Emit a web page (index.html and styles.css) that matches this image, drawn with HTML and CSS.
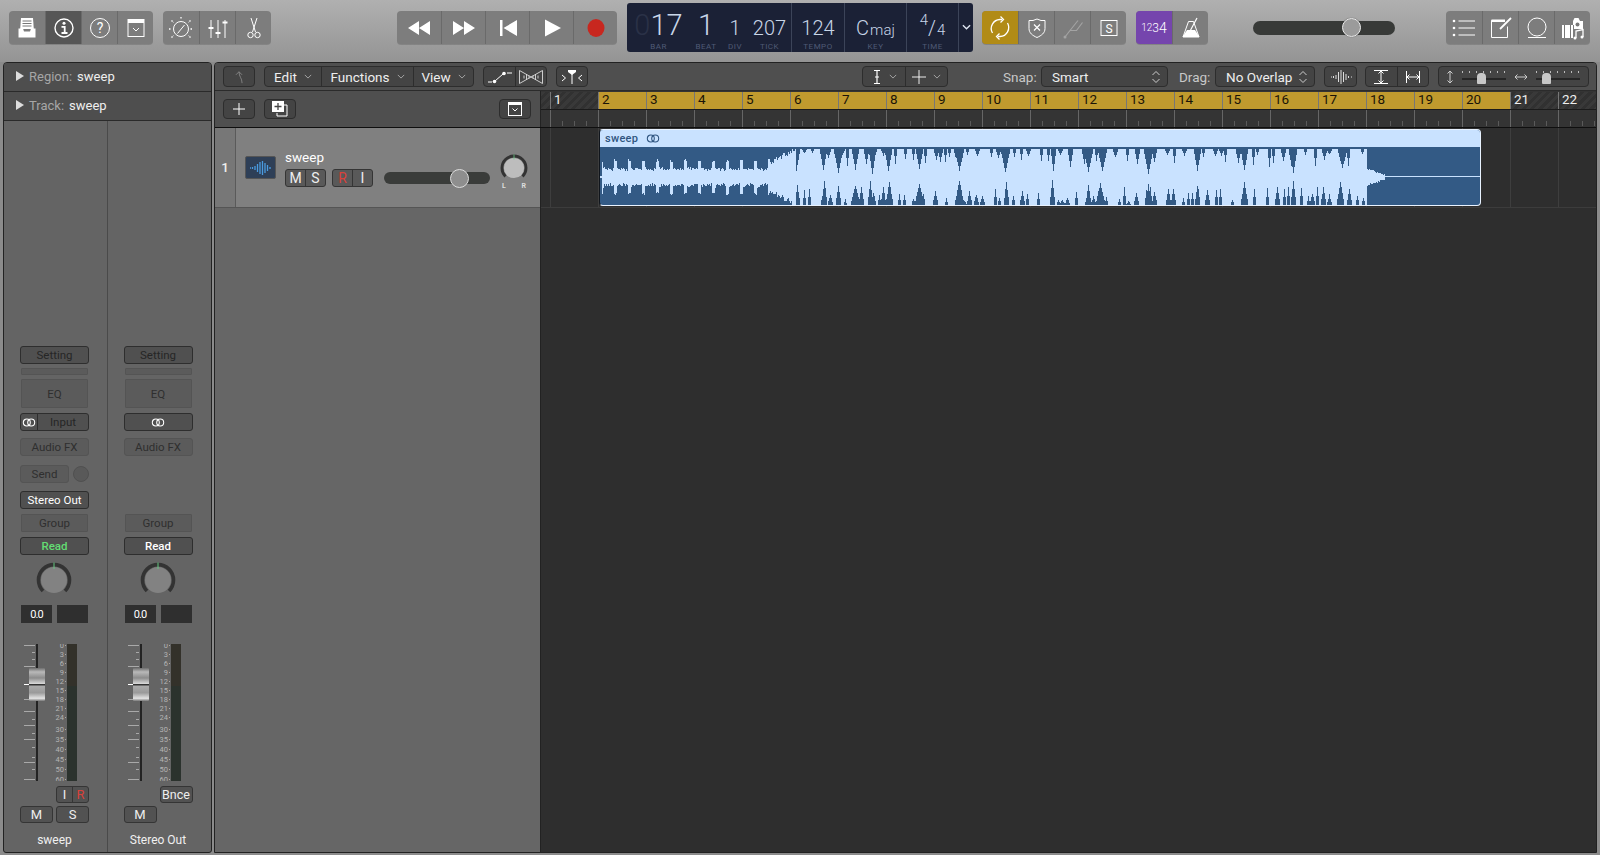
FILE: index.html
```html
<!DOCTYPE html>
<html lang="en">
<head>
    <meta charset="UTF-8">
    <title>sweep - Tracks</title>
    <link rel="stylesheet" href="styles.css">
</head>
<body>
    <!-- shared drawings -->
    <svg class="defs">
        <defs>
            <linearGradient id="capGrad" x1="0" y1="0" x2="0" y2="1">
                <stop offset="0" stop-color="#6f6f6f"/>
                <stop offset=".12" stop-color="#b9b9b9"/>
                <stop offset=".3" stop-color="#8c8c8c"/>
                <stop offset=".48" stop-color="#d9d9d9"/>
                <stop offset=".5" stop-color="#333"/>
                <stop offset=".56" stop-color="#aaa"/>
                <stop offset=".75" stop-color="#9a9a9a"/>
                <stop offset=".92" stop-color="#e2e2e2"/>
                <stop offset="1" stop-color="#777"/>
            </linearGradient>
            <symbol id="knob" viewBox="0 0 36 36">
                <circle cx="18" cy="18" r="13" class="knob-disc"/>
                <path d="M7 29A15.500 15.500 0 1 1 29 29" fill="none" stroke="#333" stroke-width="3.600"/>
                <path d="M18 .5V7" stroke="#62c77e" stroke-width="1"/>
            </symbol>
            <symbol id="link" viewBox="0 0 16 10">
                <circle cx="5.500" cy="5" r="4" fill="none" stroke="currentColor" stroke-width="1.200"/>
                <circle cx="10.500" cy="5" r="4" fill="none" stroke="currentColor" stroke-width="1.200"/>
            </symbol>
            <symbol id="chev" viewBox="0 0 10 6">
                <path d="M1 1l4 4 4-4" fill="none" stroke="currentColor" stroke-width="1"/>
            </symbol>
            <symbol id="updown" viewBox="0 0 10 14">
                <path d="M1.500 5L5 1.500 8.500 5M1.500 9L5 12.500 8.500 9" fill="none" stroke="currentColor" stroke-width="1"/>
            </symbol>
            <symbol id="fader" viewBox="0 0 69 137">
                <g stroke="#a9a9a9" stroke-width="1">
                    <path d="M4 1.500H15M12 8.500H15M12 15.500H15M4 22.500H15M12 30.500H15M12 38.500H15M4 55.500H15M12 48.500H15M4 67.500H15M12 75.500H15M4 81.500H15M12 89.500H15M4 95.500H15M12 103.500H15M4 118.500H15M12 113.500H15M12 125.500H15M4 135.500H15"/>
                    <path d="M45 1.500h1M45 10.500h1M45 19.500h1M45 28.500h1M45 37.500h1M45 46.500h1M45 55.500h1M45 64.500h1M45 73.500h1M45 85.500h1M45 95.500h1M45 105.500h1M45 115.500h1M45 125.500h1M45 135.500h1"/>
                </g>
                <rect x="16" y="0" width="2" height="137" fill="#232323"/>
                <path d="M4 40.500H10" stroke="#fff"/>
                <rect x="9" y="24" width="16" height="33" rx="1" fill="url(#capGrad)"/>
                <rect x="47" y="0" width="10" height="137" fill="#2b322d"/>
                <rect x="47" y="0" width="10" height="42" fill="#383029" opacity=".7"/>
                <g class="scale-text" text-anchor="end">
                    <text x="44" y="4">0</text><text x="44" y="13">3</text><text x="44" y="22">6</text>
                    <text x="44" y="31">9</text><text x="44" y="40">12</text><text x="44" y="49">15</text>
                    <text x="44" y="58">18</text><text x="44" y="67">21</text><text x="44" y="76">24</text>
                    <text x="44" y="88">30</text><text x="44" y="98">35</text><text x="44" y="108">40</text>
                    <text x="44" y="118">45</text><text x="44" y="128">50</text><text x="44" y="138">60</text>
                </g>
            </symbol>
        </defs>
    </svg>

    <header class="toolbar">
        <div class="tb-group first">
            <div class="tb-btn">
                <svg viewBox="0 0 24 24"><path d="M6 2h12l.8 11H5.200z" fill="#fff"/><path d="M7.500 5h9M7.500 7.500h9M7.500 10h9" stroke="#777" stroke-width="1"/><path d="M3.500 12.500h4.500l1 3h6l1-3h4.500v9H3.500z" fill="#fff"/></svg>
            </div>
            <div class="tb-btn active">
                <svg viewBox="0 0 24 24"><circle cx="12" cy="12" r="9" class="line" stroke-width="1.400"/><circle cx="12" cy="7.300" r="1.500" fill="#fff"/><path d="M9.500 10.800h3.200v6M9.500 17h6" class="line" stroke-width="1.800"/></svg>
            </div>
            <div class="tb-btn">
                <svg viewBox="0 0 24 24"><circle cx="12" cy="12" r="9.500" class="line" stroke-width="1"/><text x="12" y="17" class="glyph" font-size="14">?</text></svg>
            </div>
            <div class="tb-btn">
                <svg viewBox="0 0 24 24"><rect x="4" y="3.500" width="16" height="17" class="line" stroke-width="1"/><rect x="4" y="3.500" width="16" height="3.500" fill="#fff"/><path d="M9 12l3 3 3-3" class="line" stroke-width="1"/></svg>
            </div>
        </div>
        <div class="tb-group second">
            <div class="tb-btn">
                <svg viewBox="0 0 24 24"><circle cx="12" cy="13" r="7.500" class="line" stroke-width="1"/><path d="M8.500 17.500L15.500 9" class="line" stroke-width="1"/><path d="M12 1v2.500M2.500 4.500l2 2M21.500 4.500l-2 2M0 13h2.500M21.500 13H24M2.500 21.500l2-2M21.500 21.500l-2-2" class="line" stroke-dasharray="1.500 1" stroke-width="1.300"/></svg>
            </div>
            <div class="tb-btn">
                <svg viewBox="0 0 24 24"><path d="M5 4v18M12 4v18M19 4v18" class="line" stroke-width="1"/><path d="M2.500 12h5M9.500 17h5M16.500 6.500h5" stroke="#fff" stroke-width="1.800"/></svg>
            </div>
            <div class="tb-btn">
                <svg viewBox="0 0 24 24"><path d="M9 2l4.500 14M15 2l-4.500 14" class="line" stroke-width="1"/><circle cx="8.500" cy="19" r="2.700" class="line" stroke-width="1"/><circle cx="15.500" cy="19" r="2.700" class="line" stroke-width="1"/></svg>
            </div>
        </div>
        <div class="tb-group transport">
            <div class="tb-btn wide">
                <svg viewBox="0 0 24 24"><path d="M12 5v14L1 12zM23 5v14L12 12z" fill="#fff"/></svg>
            </div>
            <div class="tb-btn wide">
                <svg viewBox="0 0 24 24"><path d="M1 5v14l11-7zM12 5v14l11-7z" fill="#fff"/></svg>
            </div>
            <div class="tb-btn wide">
                <svg viewBox="0 0 24 24"><path d="M4 4h2.500v16H4zM21 4v16L7.500 12z" fill="#fff"/></svg>
            </div>
            <div class="tb-btn wide">
                <svg viewBox="0 0 24 24"><path d="M5 3.500v17L21 12z" fill="#fff"/></svg>
            </div>
            <div class="tb-btn wide">
                <svg viewBox="0 0 24 24"><ellipse cx="12" cy="12" rx="8.500" ry="9" fill="#c8271f"/></svg>
            </div>
        </div>

        <div class="lcd">
            <div class="lcd-cell bar"><div class="lcd-val big"><span class="ghost">0</span>17</div><div class="lcd-label">BAR</div></div>
            <div class="lcd-cell beat"><div class="lcd-val big">1</div><div class="lcd-label">BEAT</div></div>
            <div class="lcd-cell div"><div class="lcd-val">1</div><div class="lcd-label">DIV</div></div>
            <div class="lcd-cell tick sep"><div class="lcd-val">207</div><div class="lcd-label">TICK</div></div>
            <div class="lcd-cell tempo sep"><div class="lcd-val">124</div><div class="lcd-label">TEMPO</div></div>
            <div class="lcd-cell key sep"><div class="lcd-val">C<small>maj</small></div><div class="lcd-label">KEY</div></div>
            <div class="lcd-cell time sep"><div class="lcd-val"><sup>4</sup>/<small>4</small></div><div class="lcd-label">TIME</div></div>
            <div class="lcd-more"><svg viewBox="0 0 10 6"><path d="M1 1l4 4 4-4" fill="none" stroke="#dfe6f2" stroke-width="1.500"/></svg></div>
        </div>

        <div class="tb-group cycle">
            <div class="tb-btn gold">
                <svg viewBox="0 0 24 24"><path d="M4.500 17A9 9 0 0 1 12 3.500h2M19.500 7A9 9 0 0 1 12 20.500h-2" class="line" stroke-width="1.300"/><path d="M12.500 .5l3 3-3 3M11.500 17.500l-3 3 3 3" class="line" stroke-width="1.300"/></svg>
            </div>
            <div class="tb-btn">
                <svg viewBox="0 0 24 24"><path d="M4 4.500h4l4-1.500 4 1.500h4v8c0 4.500-3.500 7-8 9-4.500-2-8-4.500-8-9z" class="line" stroke-width="1"/><path d="M9 8.500l6 6M15 8.500l-6 6" class="line" stroke-width="1.200"/></svg>
            </div>
            <div class="tb-btn">
                <svg viewBox="0 0 24 24"><path d="M4 21l5-6.500M9 14.500l8-10M9 14.500l6.500 0 6-8" fill="none" stroke="#a3a3a3" stroke-width="1.200"/><circle cx="4" cy="21" r="1.500" fill="#a3a3a3"/></svg>
            </div>
            <div class="tb-btn">
                <svg viewBox="0 0 24 24"><rect x="4" y="4.500" width="16" height="15" class="line" stroke-width="1"/><text x="12" y="16.500" class="glyph" font-size="12">S</text></svg>
            </div>
        </div>
        <div class="tb-group count">
            <div class="tb-btn purple"><span class="count-in"><i>1</i><i>2</i><b>3</b><em>4</em></span></div>
            <div class="tb-btn">
                <svg viewBox="0 0 24 24"><path d="M4 21L9.500 5.500h5L20 21z" class="line" stroke-width="1"/><path d="M3.500 21L8 14h8l4.500 7z" fill="#fff"/><path d="M10 17L18 2" class="line" stroke-width="1.200"/></svg>
            </div>
        </div>
        <div class="master">
            <div class="master-knob"></div>
        </div>
        <div class="tb-group views">
            <div class="tb-btn">
                <svg viewBox="0 0 24 24"><path d="M6.500 5H23M6.500 12H23M6.500 19H23" class="line" stroke-width="1"/><circle cx="2" cy="5" r="1.300" fill="#fff"/><circle cx="2" cy="12" r="1.300" fill="#fff"/><circle cx="2" cy="19" r="1.300" fill="#fff"/></svg>
            </div>
            <div class="tb-btn">
                <svg viewBox="0 0 24 24"><path d="M18.500 10.500V21.500H2.500V4.500H15" class="line" stroke-width="1"/><path d="M2.500 3.500H16V6H2.500z" fill="#fff"/><path d="M11 13L22 2" stroke="#fff" stroke-width="1.800"/></svg>
            </div>
            <div class="tb-btn">
                <svg viewBox="0 0 24 24"><circle cx="12" cy="11" r="9" class="line" stroke-width="1"/><path d="M3 21.500h18" class="line" stroke-width="1"/></svg>
            </div>
            <div class="tb-btn">
                <svg viewBox="0 0 24 24"><path d="M12 5l1.500-3h4L19 5h3v8h-9V9H12z" fill="#fff"/><circle cx="16.500" cy="8.500" r="2" fill="#777"/><path d="M1 9h11v13H1z" fill="#fff"/><path d="M3.500 9v13M9.500 9v13" stroke="#777"/><path d="M15 22v-7l7-1.500V21" class="line" stroke-width="1.300"/><circle cx="14" cy="22" r="1.500" fill="#fff"/><circle cx="21" cy="21" r="1.500" fill="#fff"/></svg>
            </div>
        </div>
    </header>

    <div class="workspace">
        <aside class="inspector">
            <div class="insp-row"><span class="tri"></span><span class="insp-key">Region:</span> sweep</div>
            <div class="insp-row"><span class="tri"></span><span class="insp-key">Track:</span> sweep</div>
            <div class="strips">
                <div class="strip">
                    <div class="s-btn dim">Setting</div>
                    <div class="s-slot thin"></div>
                    <div class="s-slot eq">EQ</div>
                    <div class="s-btn input"><span class="input-link"><svg class="link-ic"><use href="#link"/></svg></span><span class="input-name">Input</span></div>
                    <div class="s-slot fx">Audio FX</div>
                    <div class="send-row"><div class="s-slot send">Send</div><div class="send-dot"></div></div>
                    <div class="s-btn out">Stereo Out</div>
                    <div class="s-slot group">Group</div>
                    <div class="s-btn read green">Read</div>
                    <svg class="s-knob"><use href="#knob"/></svg>
                    <div class="vals"><div class="val">0.0</div><div class="val"></div></div>
                    <svg class="s-fader"><use href="#fader"/></svg>
                    <div class="s-row-a"><div class="pair"><span>I</span><span class="red">R</span></div></div>
                    <div class="s-row-b"><div class="mini">M</div><div class="mini">S</div></div>
                    <div class="s-name">sweep</div>
                </div>
                <div class="strip">
                    <div class="s-btn dim">Setting</div>
                    <div class="s-slot thin"></div>
                    <div class="s-slot eq">EQ</div>
                    <div class="s-btn input"><svg class="link-ic"><use href="#link"/></svg></div>
                    <div class="s-slot fx">Audio FX</div>
                    <div class="send-row"></div>
                    <div class="out-gap"></div>
                    <div class="s-slot group">Group</div>
                    <div class="s-btn read">Read</div>
                    <svg class="s-knob"><use href="#knob"/></svg>
                    <div class="vals"><div class="val">0.0</div><div class="val"></div></div>
                    <svg class="s-fader"><use href="#fader"/></svg>
                    <div class="s-row-a"><div class="mini bnce">Bnce</div></div>
                    <div class="s-row-b"><div class="mini">M</div></div>
                    <div class="s-name">Stereo Out</div>
                </div>
            </div>
        </aside>

        <main class="tracks">
            <div class="local-bar">
                <div class="lb-group back"><span class="lb-item w30"><svg viewBox="0 0 14 16" class="ic-14"><path d="M10.500 15C10.500 9 7 8 7 2M3.500 5.500L7 2l3.500 3.500" fill="none" stroke="#888"/></svg></span></div>
                <div class="lb-group menus">
                    <span class="lb-item edit">Edit<svg class="chev"><use href="#chev"/></svg></span>
                    <span class="lb-item funcs">Functions<svg class="chev"><use href="#chev"/></svg></span>
                    <span class="lb-item view">View<svg class="chev"><use href="#chev"/></svg></span>
                </div>
                <div class="lb-group auto">
                    <span class="lb-item w31"><svg viewBox="0 0 26 14" class="ic-26"><path d="M1 12h4M8 11l8-7M20 3h5" stroke="#fff"/><circle cx="7.500" cy="11.500" r="1.800" fill="#fff"/><circle cx="17" cy="3.500" r="1.800" fill="#fff"/></svg></span>
                    <span class="lb-item w31"><svg viewBox="0 0 26 16" class="ic-26"><path d="M1.500 1.500L24.500 14.500M1.500 14.500L24.500 1.500M1.500 1.500V14.500M24.500 1.500V14.500" fill="none" stroke="#ddd" stroke-width=".9"/><path d="M6 6.500v3M8.500 5v6M11 6.500v3M15 6.500v3M17.500 5v6M20 6.500v3" stroke="#ddd" stroke-width=".9"/></svg></span>
                </div>
                <div class="lb-group catch"><span class="lb-item w30"><svg viewBox="0 0 26 16" class="ic-26"><path d="M3 6l3.500 3L3 12M23 6l-3.500 3 3.500 3M13 5v10" fill="none" stroke="#fff"/><path d="M9 1h8v2l-4 3-4-3z" fill="#fff"/></svg></span></div>
                <div class="lb-group tools">
                    <span class="lb-item tool"><svg viewBox="0 0 10 16" class="ic-10"><path d="M2 1.500h6M2 14.500h6M5 1.500v13M3 8h4" stroke="#fff" stroke-width="1.200"/></svg><svg class="chev"><use href="#chev"/></svg></span>
                    <span class="lb-item tool"><svg viewBox="0 0 14 14" class="ic-14"><path d="M7 0v14M0 7h14" stroke="#fff" stroke-width=".9"/></svg><svg class="chev"><use href="#chev"/></svg></span>
                </div>
                <span class="lb-label snap">Snap:</span>
                <div class="lb-group select smart"><span>Smart</span><svg class="updown"><use href="#updown"/></svg></div>
                <span class="lb-label drag">Drag:</span>
                <div class="lb-group select overlap"><span>No Overlap</span><svg class="updown"><use href="#updown"/></svg></div>
                <div class="lb-group wavebtn"><span class="lb-item fill"><svg viewBox="0 0 22 14" class="ic-22"><path d="M1 7h1M3.500 6v2M6 5v4M8.500 2v10M11 0v14M13.500 2v10M16 4v6M18.500 6v2M21 7h1" stroke="#ddd"/></svg></span></div>
                <div class="lb-group fitgrp">
                    <span class="lb-item fill"><svg viewBox="0 0 16 14" class="ic-16"><path d="M1 .5h14M1 13.500h14" stroke="#fff"/><path d="M8 1v12M5.500 3.500L8 1l2.500 2.500M5.500 10.500L8 13l2.500-2.500" fill="none" stroke="#fff"/></svg></span>
                    <span class="lb-item fill"><svg viewBox="0 0 14 14" class="ic-14"><path d="M.5 1v12M13.500 1v12" stroke="#fff"/><path d="M1 7h12M3.500 4.500L1 7l2.500 2.500M10.500 4.500L13 7l-2.500 2.500" fill="none" stroke="#fff"/></svg></span>
                </div>
                <div class="lb-group zooms">
                    <svg viewBox="0 0 8 14" class="ic-8"><path d="M4 1v12M1.500 3.500L4 1l2.500 2.500M1.500 10.500L4 13l2.500-2.500" fill="none" stroke="#ccc"/></svg>
                    <div class="zoom-slider first"><i class="dots"></i><b></b></div>
                    <svg viewBox="0 0 14 8" class="ic-14 gap"><path d="M1 4h12M3.500 1.500L1 4l2.500 2.500M10.500 1.500L13 4l-2.500 2.500" fill="none" stroke="#ccc"/></svg>
                    <div class="zoom-slider second"><i class="dots"></i><b></b></div>
                </div>
            </div>

            <div class="ruler-row">
                <div class="head-tools">
                    <div class="lb-group w32 add"><svg viewBox="0 0 12 12" class="ic-12"><path d="M6 0v12M0 6h12" stroke="#fff"/></svg></div>
                    <div class="lb-group w32 dup"><svg viewBox="0 0 18 18" class="ic-18"><path d="M12 5h4v11H6v-3" fill="none" stroke="#fff"/><path d="M1 1h12v11H1z" fill="#fff"/><path d="M7 3v7M3.500 6.500h7" stroke="#444" stroke-width="1.300"/></svg></div>
                    <div class="lb-group w32 collapse"><svg viewBox="0 0 14 14" class="ic-14"><rect x=".5" y=".5" width="13" height="13" fill="none" stroke="#fff"/><path d="M.5 .5h13v2.500H.5z" fill="#fff"/><path d="M4.500 6.500L7 9l2.500-2.500" fill="none" stroke="#fff"/></svg></div>
                </div>
                <div class="ruler">
                    <div class="ruler-bars">
                        <span class="mark"></span>
                        <span>1</span><span class="on">2</span><span class="on">3</span><span class="on">4</span><span class="on">5</span><span class="on">6</span><span class="on">7</span><span class="on">8</span><span class="on">9</span><span class="on">10</span><span class="on">11</span><span class="on">12</span><span class="on">13</span><span class="on">14</span><span class="on">15</span><span class="on">16</span><span class="on">17</span><span class="on">18</span><span class="on">19</span><span class="on">20</span><span>21</span><span>22</span>
                    </div>
                    <div class="ruler-ticks"></div>
                </div>
            </div>

            <div class="body">
                <div class="track-list">
                    <div class="track">
                        <div class="track-num">1</div>
                        <div class="track-icon"><svg viewBox="0 0 24 16"><path d="M1 8h1M3.500 7v2M6 6v4M8.500 4v8M11 2v12M13.500 1v14M16 3v10M18.500 5v6M21 7v2" stroke="#4a9be0" stroke-width="1.300"/></svg></div>
                        <div class="track-main">
                            <div class="track-name">sweep</div>
                            <div class="track-btns">
                                <div class="pair ms"><span>M</span><span>S</span></div>
                                <div class="pair ri"><span class="red">R</span><span>I</span></div>
                            </div>
                        </div>
                        <div class="track-vol"><div class="track-vol-knob"></div></div>
                        <div class="track-pan">
                            <svg class="pan-knob"><use href="#knob"/></svg>
                            <div class="pan-lr"><span>L</span><span>R</span></div>
                        </div>
                    </div>
                </div>
                <div class="arrange">
                    <div class="lane">
                        <div class="region">
                            <div class="region-head">sweep<svg class="link-ic dark"><use href="#link"/></svg></div>
                            <svg id="wave" class="region-wave" width="880" height="58" viewBox="0 0 880 58"></svg>
                        </div>
                    </div>
                </div>
            </div>
        </main>
    </div>
    <script src="wave.js"></script>
</body>
</html>
```

FILE: styles.css
```css
* {
    box-sizing: border-box;
}
html, body {
    margin: 0;
    height: 855px;
    overflow: hidden;
}
body {
    font-family: Roboto, "Liberation Sans", sans-serif;
    background-color: #8b8b8b;
    color: #eee;
}
.defs {
    position: absolute;
    width: 0;
    height: 0;
}
.line {
    fill: none;
    stroke: #fff;
}
.glyph {
    fill: #fff;
    text-anchor: middle;
    font-family: Roboto, sans-serif;
}

/* top toolbar */
.toolbar {
    display: flex;
    align-items: flex-start;
    height: 62px;
    padding-top: 11px;
    background: linear-gradient(#b0b0b0, #949494);
}
.tb-group {
    display: flex;
    height: 33px;
    background-color: #7d7d7d;
    border-radius: 4px;
    overflow: hidden;
    box-shadow: 0 1px 0 rgba(0,0,0,0.15);
}
.tb-group.first { margin-left: 9px; }
.tb-group.second { margin-left: 10px; }
.tb-group.transport { margin-left: 126px; }
.tb-group.cycle { margin-left: 9px; }
.tb-group.count { margin-left: 10px; }
.tb-group.views { margin-left: 51px; }
.tb-btn {
    display: flex;
    align-items: center;
    justify-content: center;
    width: 36px;
    border-left: 1px solid #6a6a6a;
}
.tb-btn:first-child {
    border-left: none;
}
.tb-btn svg {
    width: 24px;
    height: 24px;
}
.tb-btn.wide {
    width: 44px;
}
.tb-btn.active {
    background-color: #565656;
}
.tb-btn.gold {
    background-color: #b18b16;
}
.tb-btn.purple {
    background-color: #7545ad;
}
.count-in {
    display: flex;
    align-items: center;
    color: #fff;
    font-weight: 300;
}
.count-in i {
    font-style: normal;
    font-size: 10px;
}
.count-in b {
    font-weight: 300;
    font-size: 12px;
}
.count-in em {
    font-style: normal;
    font-size: 14px;
}

/* LCD */
.lcd {
    display: flex;
    width: 346px;
    height: 49px;
    margin-left: 10px;
    margin-top: -8px;
    background-color: #1b2136;
    border-radius: 3px;
    color: #c9d6e8;
}
.lcd-cell {
    display: flex;
    flex-direction: column;
    align-items: center;
    height: 100%;
    font-weight: 300;
}
.lcd-cell.sep {
    border-right: 1px solid #3c4459;
}
.lcd-val {
    display: flex;
    align-items: baseline;
    justify-content: center;
    height: 38px;
    padding-top: 11px;
    font-size: 20px;
    line-height: 28px;
    white-space: nowrap;
}
.lcd-val.big {
    padding-top: 6px;
    font-size: 29px;
    line-height: 32px;
}
.lcd-val small {
    font-size: 15px;
    margin-left: 1px;
}
.lcd-val sup {
    font-size: 15px;
    line-height: 10px;
    align-self: flex-start;
    margin-top: 1px;
}
.ghost {
    color: #2a3147;
}
.lcd-label {
    font-size: 8px;
    letter-spacing: .5px;
    color: #4f5a75;
    line-height: 12px;
    font-weight: 400;
}
.bar { width: 63px; }
.beat { width: 32px; }
.div { width: 26px; }
.tick { width: 44px; }
.tempo { width: 53px; }
.key { width: 62px; }
.time { width: 52px; }
.lcd-more {
    display: flex;
    align-items: center;
    justify-content: center;
    flex: 1;
    padding-bottom: 2px;
}
.lcd-more svg {
    width: 9px;
    height: 6px;
}

/* master volume */
.master {
    position: relative;
    width: 142px;
    height: 14px;
    margin-left: 45px;
    margin-top: 10px;
    border-radius: 7px;
    background-color: #383a38;
}
.master-knob {
    position: absolute;
    left: 89px;
    top: -3px;
    width: 19px;
    height: 19px;
    border-radius: 50%;
    border: 1px solid #eee;
    background-color: #9b9b9b;
    box-shadow: 0 0 1px #333;
}

/* main area */
.workspace {
    display: flex;
    gap: 2px;
    height: 791px;
    padding: 0 3px;
}

/* inspector */
.inspector {
    display: flex;
    flex-direction: column;
    width: 209px;
    border: 1px solid #222;
    border-radius: 4px 4px 3px 3px;
    overflow: hidden;
    background-color: #646464;
}
.insp-row {
    display: flex;
    align-items: center;
    flex: 0 0 29px;
    padding: 0 0 2px 12px;
    gap: 5px;
    font-size: 13px;
    background-color: #4e4e4e;
    border-bottom: 1px solid #2a2a2a;
}
.tri {
    width: 0;
    height: 0;
    border-left: 8px solid #ddd;
    border-top: 5.500px solid transparent;
    border-bottom: 5.500px solid transparent;
}
.insp-key {
    color: #a6a6a6;
}
.strips {
    display: flex;
    flex: 1;
}
.strip {
    display: flex;
    flex-direction: column;
    align-items: flex-start;
    width: 104px;
    padding: 225px 0 0 16px;
    border-right: 1px solid #4a4a4a;
    font-size: 11.500px;
}
.strip:last-child {
    border-right: none;
}
.s-btn, .s-slot {
    display: flex;
    align-items: center;
    justify-content: center;
    width: 69px;
    height: 18px;
    border-radius: 3px;
}
.s-btn {
    background-color: #505050;
    border: 1px solid #2e2e2e;
    color: #fff;
}
.s-btn.dim {
    color: #262626;
}
.s-slot {
    margin-left: 1px;
    width: 67px;
    background-color: #5b5b5b;
    border: 1px solid #545454;
    border-radius: 1px;
    color: #2f2f2f;
}
.s-slot.thin {
    height: 7px;
    margin-top: 4px;
}
.s-slot.eq {
    height: 29px;
    margin-top: 4px;
}
.s-btn.input {
    margin-top: 5px;
    overflow: hidden;
}
.input-link {
    display: flex;
    align-items: center;
    justify-content: center;
    width: 17px;
    height: 100%;
    border-right: 1px solid #2e2e2e;
}
.input-name {
    flex: 1;
    text-align: center;
    color: #262626;
}
.link-ic {
    width: 14px;
    height: 9px;
    color: #fff;
}
.link-ic.dark {
    margin-left: 8px;
    color: #2f5580;
}
.s-slot.fx {
    margin: 7px 0 0;
    width: 69px;
    border-radius: 3px;
}
.send-row {
    display: flex;
    align-items: center;
    gap: 4px;
    height: 18px;
    margin-top: 9px;
}
.s-slot.send {
    width: 49px;
    margin: 0;
    border-radius: 3px;
}
.send-dot {
    width: 16px;
    height: 16px;
    border-radius: 50%;
    background-color: #595959;
    border: 1px solid #505050;
}
.s-btn.out {
    margin-top: 8px;
}
.out-gap {
    height: 18px;
    margin-top: 8px;
}
.s-slot.group {
    margin-top: 5px;
}
.s-btn.read {
    margin-top: 5px;
    font-weight: 500;
}
.s-btn.green {
    color: #63dd73;
}
.s-knob {
    width: 36px;
    height: 36px;
    margin: 7px 0 0 16px;
    --disc: #828282;
}
.knob-disc {
    fill: var(--disc);
}
.vals {
    display: flex;
    gap: 5px;
    margin: 7px 0 0 1px;
}
.val {
    display: flex;
    align-items: center;
    justify-content: center;
    width: 31px;
    height: 18px;
    background-color: #2f2f2f;
    color: #fff;
    font-size: 11px;
    letter-spacing: -1px;
}
.s-fader {
    width: 69px;
    height: 137px;
    margin-top: 21px;
}
.scale-text {
    fill: #b4b4b4;
    font-size: 7.500px;
    font-family: Roboto, sans-serif;
}
.s-row-a {
    display: flex;
    justify-content: flex-end;
    width: 69px;
    height: 17px;
    margin-top: 5px;
}
.s-row-b {
    display: flex;
    gap: 3px;
    margin-top: 3px;
}
.mini {
    display: flex;
    align-items: center;
    justify-content: center;
    width: 33px;
    height: 17px;
    background-color: #525252;
    border: 1px solid #353535;
    border-radius: 3px;
    font-size: 13px;
}
.mini.bnce {
    font-size: 12.500px;
}
.pair {
    display: flex;
    width: 33px;
    height: 17px;
    background-color: #525252;
    border: 1px solid #353535;
    border-radius: 3px;
    font-size: 13px;
}
.pair span {
    flex: 1;
    text-align: center;
    line-height: 15px;
    border-left: 1px solid #353535;
}
.pair span:first-child {
    border-left: none;
}
.red {
    color: #d9413a;
}
.s-name {
    width: 69px;
    margin-top: 10px;
    text-align: center;
    font-size: 12px;
    color: #f0f0f0;
    white-space: nowrap;
}

/* tracks area */
.tracks {
    display: flex;
    flex-direction: column;
    flex: 1;
    min-width: 0;
    border: 1px solid #222;
    border-radius: 4px 4px 0 0;
    overflow: hidden;
    background-color: #666;
}
.local-bar {
    display: flex;
    align-items: center;
    flex: 0 0 28px;
    padding: 0 0 0 8px;
    background-color: #4f4f4f;
    border-bottom: 1px solid #2b2b2b;
    font-size: 13.500px;
}
.lb-group {
    display: flex;
    flex: none;
    align-items: center;
    height: 21px;
    background-color: #444;
    border: 1px solid #2d2d2d;
    border-radius: 4px;
}
.lb-item {
    display: flex;
    align-items: center;
    justify-content: center;
    gap: 7px;
    height: 100%;
    border-left: 1px solid #2d2d2d;
}
.lb-item:first-child {
    border-left: none;
}
.lb-item.w30 { width: 30px; }
.lb-item.w31 { width: 31px; }
.lb-group.w32 {
    justify-content: center;
    width: 32px;
}
.lb-item.edit { width: 56px; }
.lb-item.funcs { width: 92px; }
.lb-item.view { width: 60px; }
.lb-item.tool { width: 42px; }
.lb-item.fill { flex: 1; }
.chev {
    width: 8px;
    height: 5px;
    color: #bbb;
}
.updown {
    width: 10px;
    height: 14px;
    color: #ccc;
}
.ic-8 { width: 8px; height: 14px; }
.ic-10 { width: 10px; height: 16px; }
.ic-12 { width: 12px; height: 12px; }
.ic-14 { width: 14px; height: 14px; }
.ic-16 { width: 16px; height: 14px; }
.ic-18 { width: 18px; height: 18px; }
.ic-22 { width: 22px; height: 14px; }
.ic-26 { width: 26px; height: 16px; }
.lb-group.menus { margin-left: 9px; }
.lb-group.auto { margin-left: 9px; }
.lb-group.catch { margin-left: 9px; }
.lb-group.tools { margin-left: 274px; }
.lb-label {
    flex: 0 0 34px;
    color: #c8c8c8;
}
.lb-label.snap { margin-left: 55px; }
.lb-label.drag { flex-basis: 32px; margin-left: 11px; }
.select {
    justify-content: space-between;
    padding: 0 6px 0 10px;
}
.smart {
    width: 127px;
    margin-left: 4px;
}
.overlap {
    width: 100px;
    margin-left: 4px;
}
.wavebtn {
    width: 33px;
    margin-left: 9px;
}
.fitgrp {
    width: 64px;
    margin-left: 8px;
}
.zooms {
    width: 151px;
    margin-left: 9px;
    padding-left: 7px;
}
.ic-14.gap {
    margin-left: 8px;
}
.zoom-slider {
    position: relative;
    width: 44px;
    height: 14px;
    margin-left: 8px;
}
.zoom-slider::before {
    content: "";
    position: absolute;
    left: 0;
    right: 0;
    top: 8px;
    height: 2px;
    background-color: #262626;
}
.zoom-slider .dots {
    position: absolute;
    left: 0;
    right: 0;
    top: 1px;
    height: 2px;
    background: repeating-linear-gradient(90deg, #bbb 0 1px, transparent 1px 7px);
}
.zoom-slider b {
    position: absolute;
    top: 3px;
    width: 9px;
    height: 11px;
    background-color: #c8c8c8;
    border-radius: 4px 4px 1px 1px;
}
.zoom-slider.first b { left: 15px; }
.zoom-slider.second b { left: 6px; }

.ruler-row {
    display: flex;
    flex: 0 0 37px;
    border-bottom: 1px solid #0f0f0f;
    background-color: #4f4f4f;
}
.head-tools {
    display: flex;
    flex: 0 0 326px;
    align-items: flex-start;
    gap: 9px;
    padding: 8px 0 0 8px;
    border-right: 1px solid #222;
}
.head-tools .lb-group {
    height: 20px;
}
.head-tools .collapse {
    margin-left: auto;
    margin-right: 9px;
}
.ruler {
    flex: 1;
    min-width: 0;
    background-color: #343434;
}
.ruler-bars {
    display: flex;
    height: 18px;
    margin-top: 1px;
    border-bottom: 1px solid #1b1b1b;
    background: repeating-linear-gradient(135deg, #393939 0 3px, #313131 3px 6px);
    font-size: 13.500px;
    color: #eee;
    overflow: hidden;
}
.ruler-bars .mark {
    flex: 0 0 9px;
    width: 9px;
}
.ruler-bars span:not(.mark) {
    flex: 0 0 48px;
    padding-left: 3px;
    line-height: 15px;
    border-left: 1px solid #777;
}
.ruler-bars .on {
    background-color: #c09a2e;
    border-left-color: #1d1606;
    color: #1a1407;
}
.ruler-ticks {
    height: 17px;
    background:
        repeating-linear-gradient(90deg, #666 0 1px, transparent 1px 48px) 9px 0 / 100% 100% no-repeat,
        repeating-linear-gradient(90deg, #5a5a5a 0 1px, transparent 1px 12px) 9px 11px / 100% 5px no-repeat;
}

.body {
    display: flex;
    flex: 1;
}
.track-list {
    flex: 0 0 326px;
    border-right: 1px solid #222;
}
.track {
    display: flex;
    align-items: flex-start;
    height: 80px;
    background-color: #808080;
    border-bottom: 1px solid #555;
}
.track-num {
    width: 21px;
    height: 100%;
    padding-top: 31px;
    border-right: 1px solid #5a5a5a;
    text-align: center;
    font-size: 13.500px;
    font-weight: 500;
    color: #eee;
    background-color: #777;
}
.track-icon {
    display: flex;
    align-items: center;
    justify-content: center;
    width: 31px;
    height: 23px;
    margin: 28px 0 0 9px;
    background-color: #2e3f57;
    border: 1px solid #555;
    border-radius: 2px;
}
.track-icon svg {
    width: 24px;
    height: 16px;
}
.track-main {
    margin: 20px 0 0 9px;
}
.track-name {
    height: 21px;
    font-size: 13.500px;
    line-height: 18px;
    color: #fff;
}
.track-btns {
    display: flex;
    gap: 6px;
}
.pair.ms, .pair.ri {
    width: 41px;
    height: 18px;
    background-color: #595959;
    font-size: 14px;
}
.pair.ms span, .pair.ri span {
    line-height: 16px;
}
.track-vol {
    position: relative;
    width: 106px;
    height: 12px;
    margin: 44px 0 0 11px;
    border-radius: 6px;
    background-color: #3a3c3a;
}
.track-vol-knob {
    position: absolute;
    left: 66px;
    top: -3px;
    width: 19px;
    height: 19px;
    border-radius: 50%;
    border: 1px solid #ddd;
    background-color: #8e8e8e;
}
.track-pan {
    width: 28px;
    margin: 26px 0 0 10px;
}
.pan-knob {
    display: block;
    width: 28px;
    height: 28px;
    --disc: #bdbdbd;
}
.pan-lr {
    display: flex;
    justify-content: space-between;
    padding: 0 2px;
    font-size: 7px;
    line-height: 8px;
    font-weight: 700;
    color: #ddd;
}
.arrange {
    flex: 1;
    min-width: 0;
    background-color: #2e2e2e;
}
.lane {
    height: 80px;
    padding: 1px 0 0 58px;
    border-bottom: 1px solid #3c3c3c;
    background: repeating-linear-gradient(90deg, #3e3e3e 0 1px, transparent 1px 48px) 9px 0 no-repeat;
}
.region {
    width: 882px;
    height: 77px;
    border: 1px solid #e8f2ff;
    border-left-color: #10151c;
    border-radius: 4px;
    overflow: hidden;
    background-color: #335a85;
}
.region-head {
    display: flex;
    align-items: center;
    height: 17px;
    padding-left: 5px;
    background-color: #c9e2ff;
    color: #2f5580;
    font-size: 11px;
    font-weight: 500;
    letter-spacing: .3px;
}
.region-wave {
    display: block;
}
```

FILE: wave.js
```js
// Draw the audio waveform of the region: a quiet intro, then the loud part with a few dips
const WIDTH = 880;
const CENTER = 30;
const LOUD_START = 196;
const LOUD_END = 767;
const DIPS = [195, 223, 238, 255, 270, 287, 318, 357, 405, 452, 487, 500, 547, 597, 643, 692, 740];

let seed = 42;
function rand() {
    seed = (seed * 16807) % 2147483647;
    return seed / 2147483647;
}

function baseAmp(x) {
    if (x < 2) return 1;
    if (x < 170) {
        const phase = x % 14;
        const spike = phase < 3 ? 17 : 8 + 5 * Math.exp(-phase / 3);
        return spike + rand() * 3 - 2;
    }
    if (x < LOUD_START) return 11 + (x - 170) * 0.6 + rand() * 5;
    if (x < LOUD_END) return 28;
    if (x < 785) return Math.max(1, 7 - (x - LOUD_END) / 3 + rand() * 2);
    return 0.6;
}

// cut a v-shaped notch out of the loud part
function notch(side, at, halfWidth, minAmp) {
    for (let x = at - halfWidth; x <= at + halfWidth; x++) {
        if (x < LOUD_START || x >= LOUD_END) continue;
        const dist = Math.abs(x - at);
        const amp = minAmp + (28 - minAmp) * dist / (halfWidth + 1);
        side[x] = Math.min(side[x], amp);
    }
}

function makeSide() {
    const side = [];
    for (let x = 0; x < WIDTH; x++) {
        side.push(baseAmp(x));
    }
    for (const d of DIPS) {
        notch(side, d + Math.floor(rand() * 3), 2 + Math.floor(rand() * 3), 3 + rand() * 6);
    }
    for (let x = LOUD_START; x < LOUD_END; x += 4 + Math.floor(rand() * 11)) {
        notch(side, x, 1 + Math.floor(rand() * 2), 10 + rand() * 14);
    }
    return side;
}

function drawWave() {
    const upper = makeSide();
    const lower = makeSide();
    let d = '';
    for (let x = 0; x < WIDTH; x++) {
        const y = Math.round(CENTER - upper[x]);
        const h = Math.round(upper[x] + lower[x]);
        d += 'M' + x + ' ' + y + 'h1v' + Math.max(h, 1) + 'h-1z';
    }
    const path = document.createElementNS('http://www.w3.org/2000/svg', 'path');
    path.setAttribute('d', d);
    path.setAttribute('fill', '#c9e2ff');
    document.getElementById('wave').appendChild(path);
}

drawWave();
```
